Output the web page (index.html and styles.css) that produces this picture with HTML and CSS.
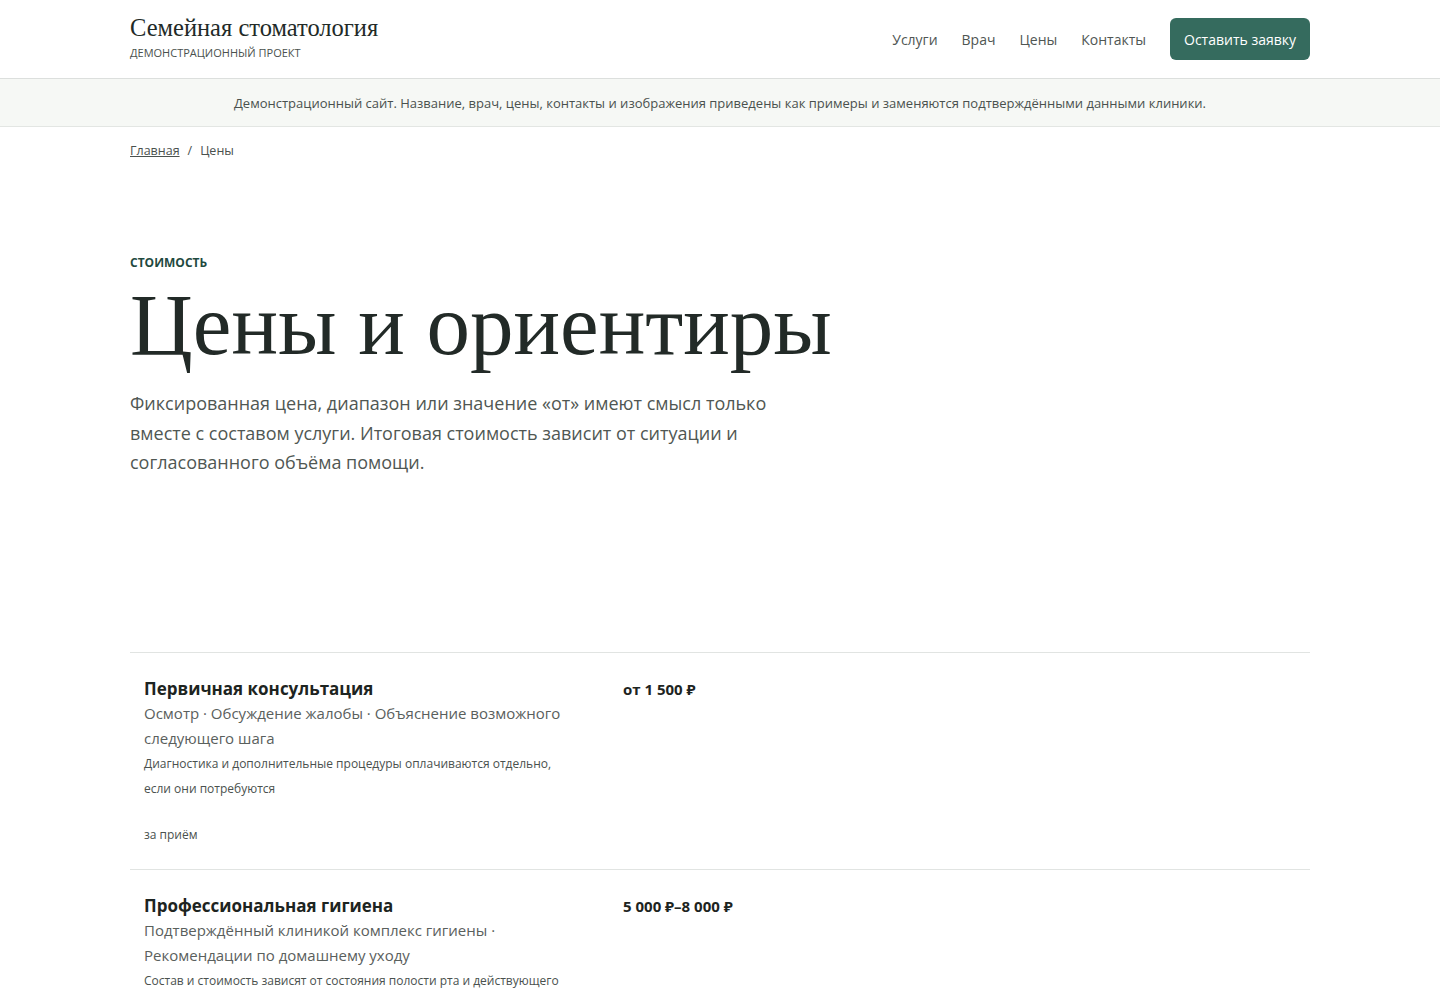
FILE: index.html
```html
<!DOCTYPE html>
<html lang="ru">
<head>
    <meta charset="UTF-8">
    <meta name="viewport" content="width=device-width, initial-scale=1.0">
    <title>Цены и ориентиры — Семейная стоматология</title>
    <link rel="stylesheet" href="styles.css">
</head>
<body>
    <!-- шапка -->
    <header class="header">
        <div class="w header-inner">
            <a class="logo" href="#">
                <span class="logo-name">Семейная стоматология</span>
                <span class="logo-sub">Демонстрационный проект</span>
            </a>
            <nav class="nav">
                <a href="#">Услуги</a>
                <a href="#">Врач</a>
                <a href="#">Цены</a>
                <a href="#">Контакты</a>
                <a class="btn" href="#">Оставить заявку</a>
            </nav>
        </div>
    </header>
    <div class="notice">
        Демонстрационный сайт. Название, врач, цены, контакты и изображения приведены как примеры и заменяются подтверждёнными данными клиники.
    </div>

    <main class="w">
        <div class="crumbs">
            <a href="#">Главная</a>
            <span class="sep">/</span>
            <span>Цены</span>
        </div>

        <section class="hero">
            <p class="eyebrow">Стоимость</p>
            <h1>Цены и ориентиры</h1>
            <p class="lead">Фиксированная цена, диапазон или значение «от» имеют смысл только вместе с составом услуги. Итоговая стоимость зависит от ситуации и согласованного объёма помощи.</p>
        </section>

        <!-- список цен -->
        <ul class="prices">
            <li class="price-row">
                <div class="price-info">
                    <h3>Первичная консультация</h3>
                    <p class="desc">Осмотр · Обсуждение жалобы · Объяснение возможного следующего шага</p>
                    <p class="note">Диагностика и дополнительные процедуры оплачиваются отдельно, если они потребуются</p>
                    <p class="unit">за приём</p>
                </div>
                <div class="price-value">от 1 500 ₽</div>
            </li>
            <li class="price-row">
                <div class="price-info">
                    <h3>Профессиональная гигиена</h3>
                    <p class="desc">Подтверждённый клиникой комплекс гигиены · Рекомендации по домашнему уходу</p>
                    <p class="note">Состав и стоимость зависят от состояния полости рта и действующего прайса клиники</p>
                    <p class="unit">за процедуру</p>
                </div>
                <div class="price-value">5 000 ₽–8 000 ₽</div>
            </li>
        </ul>
    </main>
</body>
</html>
```

FILE: styles.css
```css
* {
  margin: 0;
  padding: 0;
  box-sizing: border-box;
}
body {
  font-family: "Open Sans", "Noto Sans", sans-serif;
  color: #222a27;
  background: #fff;
}
a {
  color: inherit;
  text-decoration: none;
}
ul {
  list-style: none;
}
.w {
  width: 1180px;
  margin: 0 auto;
}
.header {
  border-bottom: 1px solid #dcdfdd;
}
.header-inner {
  height: 78px;
  display: flex;
  align-items: center;
  justify-content: space-between;
}
.logo {
  display: flex;
  flex-direction: column;
  gap: 3px;
  margin-top: -3px;
}
.logo-name {
  font: 24.5px "Liberation Serif", "DejaVu Serif", serif;
  color: #222a27;
  line-height: 1.1;
}
.logo-sub {
  font-size: 11px;
  text-transform: uppercase;
  color: #4a514e;
}
.nav {
  display: flex;
  align-items: center;
  gap: 24px;
  font-size: 14px;
  color: #4f5653;
}
.nav .btn {
  height: 42px;
  padding: 0 14px;
  display: flex;
  align-items: center;
  background: #356b5e;
  color: #fff;
  border-radius: 6px;
}
.notice {
  background: #f6f8f5;
  border-bottom: 1px solid #e3e6e3;
  text-align: center;
  font-size: 13px;
  color: #4a514e;
  padding: 15px 0 14px;
}
.crumbs {
  padding-top: 15px;
  font-size: 12.5px;
  color: #4a514e;
  display: flex;
  gap: 8px;
}
.crumbs a {
  text-decoration: underline;
}
.hero {
  padding-top: 95px;
  padding-bottom: 174px;
}
.eyebrow {
  font-size: 12px;
  font-weight: 700;
  text-transform: uppercase;
  color: #1f4a3f;
}
.hero h1 {
  font: 400 87px "Liberation Serif", "DejaVu Serif", serif;
  color: #222a27;
  line-height: 1;
  margin-top: 10px;
}
.lead {
  margin-top: 21px;
  max-width: 640px;
  font-size: 18px;
  line-height: 29.5px;
  color: #505753;
}
.prices {
  border-top: 1px solid #e1e4e2;
}
.price-row {
  display: grid;
  grid-template-columns: 436px 1fr;
  column-gap: 43px;
  padding: 24px 14px 22px;
  border-bottom: 1px solid #e1e4e2;
}
.price-info h3 {
  font-size: 17px;
  font-weight: 700;
  line-height: 24px;
  color: #1d2421;
}
.desc {
  font-size: 15px;
  line-height: 25px;
  color: #5a605d;
}
.note {
  font-size: 12px;
  line-height: 25px;
  color: #4a514e;
}
.unit {
  margin-top: 21px;
  font-size: 12px;
  line-height: 25px;
  color: #4a514e;
}
.price-value {
  font-size: 15px;
  font-weight: 700;
  line-height: 24px;
  color: #1d2421;
}
```
